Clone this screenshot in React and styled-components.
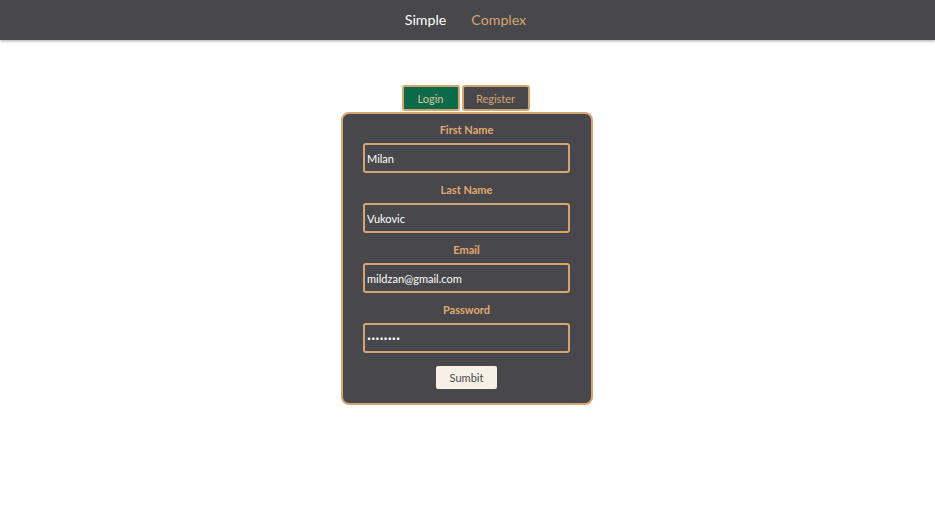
import React from "react";
import styled, { createGlobalStyle } from "styled-components";

const Global = createGlobalStyle`
  html, body { margin: 0; padding: 0; background: #ffffff; }
  body { font-family: Lato, "Open Sans", sans-serif; }
  * { box-sizing: border-box; }
`;

const tan = "#d6a56f";
const dark = "#48474b";

const Nav = styled.nav`
  height: 40px;
  background: ${dark};
  display: flex;
  align-items: center;
  justify-content: center;
  gap: 25px;
  box-shadow: 0 1px 3px rgba(0, 0, 0, 0.35);
  padding-right: 4px;
`;

const NavLink = styled.a`
  font-size: 14.2px;
  color: ${(p) => (p.$active ? "#ffffff" : tan)};
  text-decoration: none;
  cursor: pointer;
  line-height: 20px;
  margin-top: -1px;
`;

const Main = styled.main`
  display: flex;
  flex-direction: column;
  align-items: center;
  padding-top: 45px;
  padding-right: 1px;
`;

const Tabs = styled.div`
  display: flex;
  gap: 2px;
  margin-right: 3px;
`;

const Tab = styled.button`
  height: 26px;
  width: ${(p) => p.$w}px;
  border: 2px solid ${tan};
  border-radius: 3px;
  background: ${(p) => (p.$active ? "#0b6a4a" : dark)};
  color: ${(p) => (p.$active ? "#dcc49a" : tan)};
  font-family: inherit;
  font-size: 11px;
  padding: 0;
  cursor: pointer;
`;

const Card = styled.form`
  margin-top: 1px;
  width: 252px;
  background: ${dark};
  border: 2px solid ${tan};
  border-radius: 8px;
  padding: 9px 21px 14px 20px;
  display: flex;
  flex-direction: column;
  align-items: center;
  gap: 10px;
`;

const Field = styled.div`
  width: 100%;
  display: flex;
  flex-direction: column;
  align-items: center;
  gap: 6px;
`;

const Label = styled.label`
  font-size: 11px;
  font-weight: 700;
  color: #e0a96f;
  line-height: 14px;
`;

const Input = styled.input`
  width: 100%;
  height: 30px;
  border: 2px solid ${tan};
  border-radius: 3px;
  background: ${dark};
  color: #ffffff;
  font-family: inherit;
  font-size: 11px;
  padding: 0 2px;
  outline: none;

  &[type="password"] {
    font-family: "Open Sans", sans-serif;
    font-size: 11px;
  }
`;

const Submit = styled.button`
  margin-top: 3px;
  width: 61px;
  height: 23px;
  border: none;
  border-radius: 2px;
  background: #f6f0e7;
  color: #4a4a4a;
  font-family: inherit;
  font-size: 11px;
  cursor: pointer;
`;

const fields = [
  { label: "First Name", value: "Milan", type: "text" },
  { label: "Last Name", value: "Vukovic", type: "text" },
  { label: "Email", value: "mildzan@gmail.com", type: "email" },
  { label: "Password", value: "mildzan1", type: "password" },
];

export default function App() {
  return (
    <>
      <Global />
      <Nav>
        <NavLink $active>Simple</NavLink>
        <NavLink>Complex</NavLink>
      </Nav>
      <Main>
        <Tabs>
          <Tab $active $w={58}>Login</Tab>
          <Tab $w={68}>Register</Tab>
        </Tabs>
        <Card onSubmit={(e) => e.preventDefault()}>
          {fields.map((f) => (
            <Field key={f.label}>
              <Label>{f.label}</Label>
              <Input type={f.type} defaultValue={f.value} />
            </Field>
          ))}
          <Submit type="submit">Sumbit</Submit>
        </Card>
      </Main>
    </>
  );
}
